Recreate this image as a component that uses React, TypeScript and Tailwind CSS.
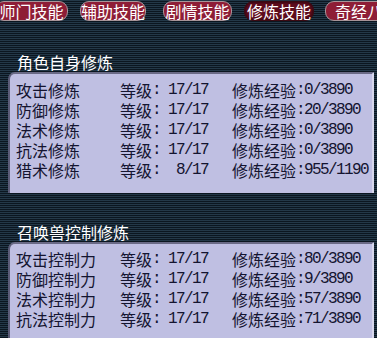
import React from 'react';

const tabs = [
  { label: '师门技能', left: -5, width: 73, active: false },
  { label: '辅助技能', left: 80, width: 66, active: false },
  { label: '剧情技能', left: 163, width: 69, active: false },
  { label: '修炼技能', left: 244, width: 70, active: true },
  { label: '奇经八脉', left: 325, width: 70, active: false },
];

const selfRows = [
  { name: '攻击修炼', level: '17/17', exp: '0/3890' },
  { name: '防御修炼', level: '17/17', exp: '20/3890' },
  { name: '法术修炼', level: '17/17', exp: '0/3890' },
  { name: '抗法修炼', level: '17/17', exp: '0/3890' },
  { name: '猎术修炼', level: '8/17', exp: '955/1190' },
];

const petRows = [
  { name: '攻击控制力', level: '17/17', exp: '80/3890' },
  { name: '防御控制力', level: '17/17', exp: '9/3890' },
  { name: '法术控制力', level: '17/17', exp: '57/3890' },
  { name: '抗法控制力', level: '17/17', exp: '71/3890' },
];

const cjk = "font-['Noto_Sans_CJK_SC',sans-serif]";
// 16px mono squeezed to 8px per char, like the game's half-width digits
const mono = "font-['Liberation_Mono','DejaVu_Sans_Mono',monospace] text-[16px] tracking-[-1.6px]";

function Row({ name, level, exp }: { name: string; level: string; exp: string }) {
  return (
    <div className={`flex h-[20px] items-center text-[16px] leading-[20px] text-[#141430] ${cjk}`}>
      <span className="w-[104px] shrink-0">{name}</span>
      <span className="w-[32px] shrink-0">等级</span>
      <span className={`w-[8px] shrink-0 ${mono}`}>:</span>
      <span className={`w-[48px] shrink-0 text-right ${mono}`}>{level}</span>
      <span className="w-[24px] shrink-0" />
      <span className="w-[64px] shrink-0">修炼经验</span>
      <span className={`whitespace-nowrap ${mono}`}>:{exp}</span>
    </div>
  );
}

function Panel({ rows, pt, pb }: { rows: typeof selfRows; pt: string; pb: string }) {
  return (
    <div
      className={`ml-[8px] mr-[3px] rounded-tl-[7px] border-l-[2px] border-t-[2px] border-r-[2px] border-l-[#5c5c78] border-t-[#6a6a86] border-r-[#d8d8ec] bg-[#bfbfe2] pl-[6px] ${pt} ${pb}`}
    >
      {rows.map((r) => (
        <Row key={r.name} {...r} />
      ))}
    </div>
  );
}

export default function App() {
  return (
    <div className="h-[338px] w-[377px] overflow-hidden bg-[repeating-linear-gradient(to_bottom,#233848_0px,#233848_1px,#0b1620_1px,#0b1620_2px)]">
      <div className="relative h-[22px]">
        {tabs.map((t) => (
          <div
            key={t.label}
            className={`absolute top-[1px] flex h-[20px] items-center justify-center rounded-[9px] border text-[16px] leading-[20px] text-white ${cjk} ${
              t.active
                ? 'border-[#3a0a12] bg-[#5e0c1d] shadow-[inset_0_0_3px_#1a0006]'
                : 'border-[#a89498] bg-[#8e1d36]'
            }`}
            style={{ left: t.left, width: t.width }}
          >
            <span className={t.label === '奇经八脉' ? 'ml-[14px] whitespace-nowrap' : 'whitespace-nowrap'}>{t.label}</span>
          </div>
        ))}
      </div>
      <div className={`mt-[30px] h-[20px] pl-[17px] text-[16px] leading-[20px] text-white ${cjk}`}>角色自身修炼</div>
      <Panel rows={selfRows} pt="pt-[6px]" pb="pb-[13px]" />
      <div className={`mt-[29px] h-[20px] pl-[17px] text-[16px] leading-[20px] text-white ${cjk}`}>召唤兽控制修炼</div>
      <Panel rows={petRows} pt="pt-[5px]" pb="pb-[20px]" />
    </div>
  );
}
